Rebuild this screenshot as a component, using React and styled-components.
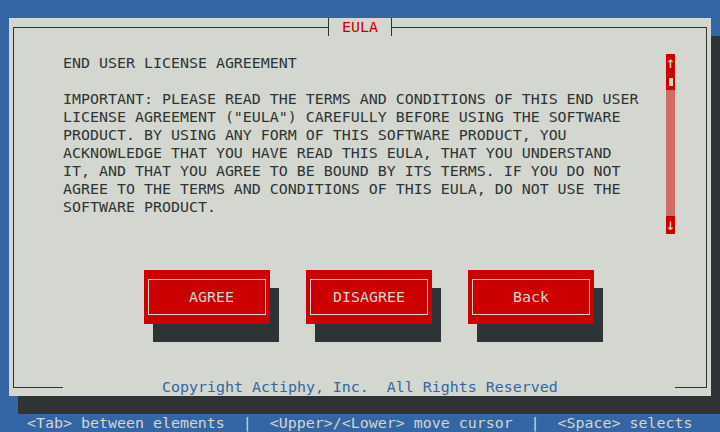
import React from "react";
import styled, { createGlobalStyle } from "styled-components";

const CELL_W = 9;
const CELL_H = 18;

const GlobalStyle = createGlobalStyle`
  html, body {
    margin: 0;
    padding: 0;
    background: #3465a4;
  }
  body {
    font-family: "DejaVu Sans Mono", "Liberation Mono", monospace;
    font-size: 14.95px;
    line-height: ${CELL_H}px;
  }
`;

const Screen = styled.div`
  width: 720px;
  height: 432px;
  display: flex;
  flex-flow: column;
  background: #3465a4;
  overflow: hidden;
`;

const TopBar = styled.div`
  height: ${CELL_H}px;
  flex: none;
`;

const Window = styled.section`
  width: 702px;
  height: 378px;
  margin-left: ${CELL_W}px;
  box-sizing: border-box;
  padding: 9px 4px 0;
  display: flex;
  flex-flow: column;
  background: #d3d7cf;
  box-shadow: ${CELL_W}px ${CELL_H}px 0 #2e3436;
  color: #2e3436;
`;

const Frame = styled.div`
  position: relative;
  flex: 1;
  box-sizing: border-box;
  border: 1px solid #2e3436;
  border-bottom: none;
  padding: 26px 0 0 49px;
`;

const Title = styled.div`
  position: absolute;
  top: -10px;
  left: 314px;
  width: 64px;
  height: ${CELL_H}px;
  box-sizing: border-box;
  border-left: 1px solid #2e3436;
  border-right: 1px solid #2e3436;
  background: #d3d7cf;
  color: #cc0000;
  text-align: center;
`;

const Body = styled.div`
  display: flex;
  align-items: flex-start;
`;

const TextPane = styled.div`
  width: 603px;
  white-space: pre;
`;

const Line = styled.div`
  height: ${CELL_H}px;
`;

const ScrollBar = styled.div`
  width: ${CELL_W}px;
  display: flex;
  flex-flow: column;
`;

const ScrollCell = styled.div`
  height: ${CELL_H}px;
  display: flex;
  align-items: center;
  justify-content: center;
  background: ${({ $track }) => ($track ? "#cf6a66" : "#cc0000")};
  color: #d3d7cf;
  font-size: 16px;
`;

const Thumb = styled.span`
  width: 4px;
  height: 8px;
  margin-top: 1px;
  background: #d3d7cf;
`;

const ButtonRow = styled.div`
  display: flex;
  gap: 36px;
  margin-top: 36px;
  padding-left: 81px;
`;

const Button = styled.div`
  width: 126px;
  height: 54px;
  box-sizing: border-box;
  padding: 9px 4px;
  background: #cc0000;
  box-shadow: ${CELL_W}px ${CELL_H}px 0 #2e3436;
  color: #d3d7cf;
`;

const ButtonFace = styled.div`
  height: 100%;
  box-sizing: border-box;
  border: 1px solid #d3d7cf;
  display: flex;
  align-items: center;
  padding-left: ${({ $lead }) => $lead * CELL_W - 5}px;
`;

const Footer = styled.div`
  height: ${CELL_H}px;
  flex: none;
  display: flex;
  align-items: flex-start;
`;

const Corner = styled.div`
  width: ${({ $w }) => $w}px;
  height: 10px;
  box-sizing: border-box;
  border-bottom: 1px solid #2e3436;
  ${({ $right }) =>
    $right
      ? "border-right: 1px solid #2e3436; margin-left: auto;"
      : "border-left: 1px solid #2e3436;"}
`;

const Copyright = styled.span`
  margin-left: 99px;
  color: #3465a4;
  white-space: pre;
`;

const HelpLine = styled.div`
  height: ${CELL_H}px;
  margin-top: ${CELL_H}px;
  padding-left: 27px;
  color: #d3d7cf;
  white-space: pre;
`;

const heading = "END USER LICENSE AGREEMENT";

const paragraph = [
  "IMPORTANT: PLEASE READ THE TERMS AND CONDITIONS OF THIS END USER",
  'LICENSE AGREEMENT ("EULA") CAREFULLY BEFORE USING THE SOFTWARE',
  "PRODUCT. BY USING ANY FORM OF THIS SOFTWARE PRODUCT, YOU",
  "ACKNOWLEDGE THAT YOU HAVE READ THIS EULA, THAT YOU UNDERSTAND",
  "IT, AND THAT YOU AGREE TO BE BOUND BY ITS TERMS. IF YOU DO NOT",
  "AGREE TO THE TERMS AND CONDITIONS OF THIS EULA, DO NOT USE THE",
  "SOFTWARE PRODUCT.",
];

const buttons = [
  { label: "AGREE", lead: 5 },
  { label: "DISAGREE", lead: 3 },
  { label: "Back", lead: 5 },
];

const App = () => {
  return (
    <Screen>
      <GlobalStyle />
      <TopBar />
      <Window>
        <Frame>
          <Title>EULA</Title>
          <Body>
            <TextPane>
              <Line>{heading}</Line>
              <Line />
              {paragraph.map((text) => (
                <Line key={text}>{text}</Line>
              ))}
            </TextPane>
            <ScrollBar>
              <ScrollCell>↑</ScrollCell>
              <ScrollCell>
                <Thumb />
              </ScrollCell>
              {Array.from({ length: 7 }).map((_, i) => (
                <ScrollCell key={i} $track />
              ))}
              <ScrollCell>↓</ScrollCell>
            </ScrollBar>
          </Body>
          <ButtonRow>
            {buttons.map(({ label, lead }) => (
              <Button key={label}>
                <ButtonFace $lead={lead}>{label}</ButtonFace>
              </Button>
            ))}
          </ButtonRow>
        </Frame>
        <Footer>
          <Corner $w={50} />
          <Copyright>Copyright Actiphy, Inc.  All Rights Reserved</Copyright>
          <Corner $w={32} $right />
        </Footer>
      </Window>
      <HelpLine>
        {"<Tab> between elements  |  <Upper>/<Lower> move cursor  |  <Space> selects"}
      </HelpLine>
    </Screen>
  );
};

export default App;
